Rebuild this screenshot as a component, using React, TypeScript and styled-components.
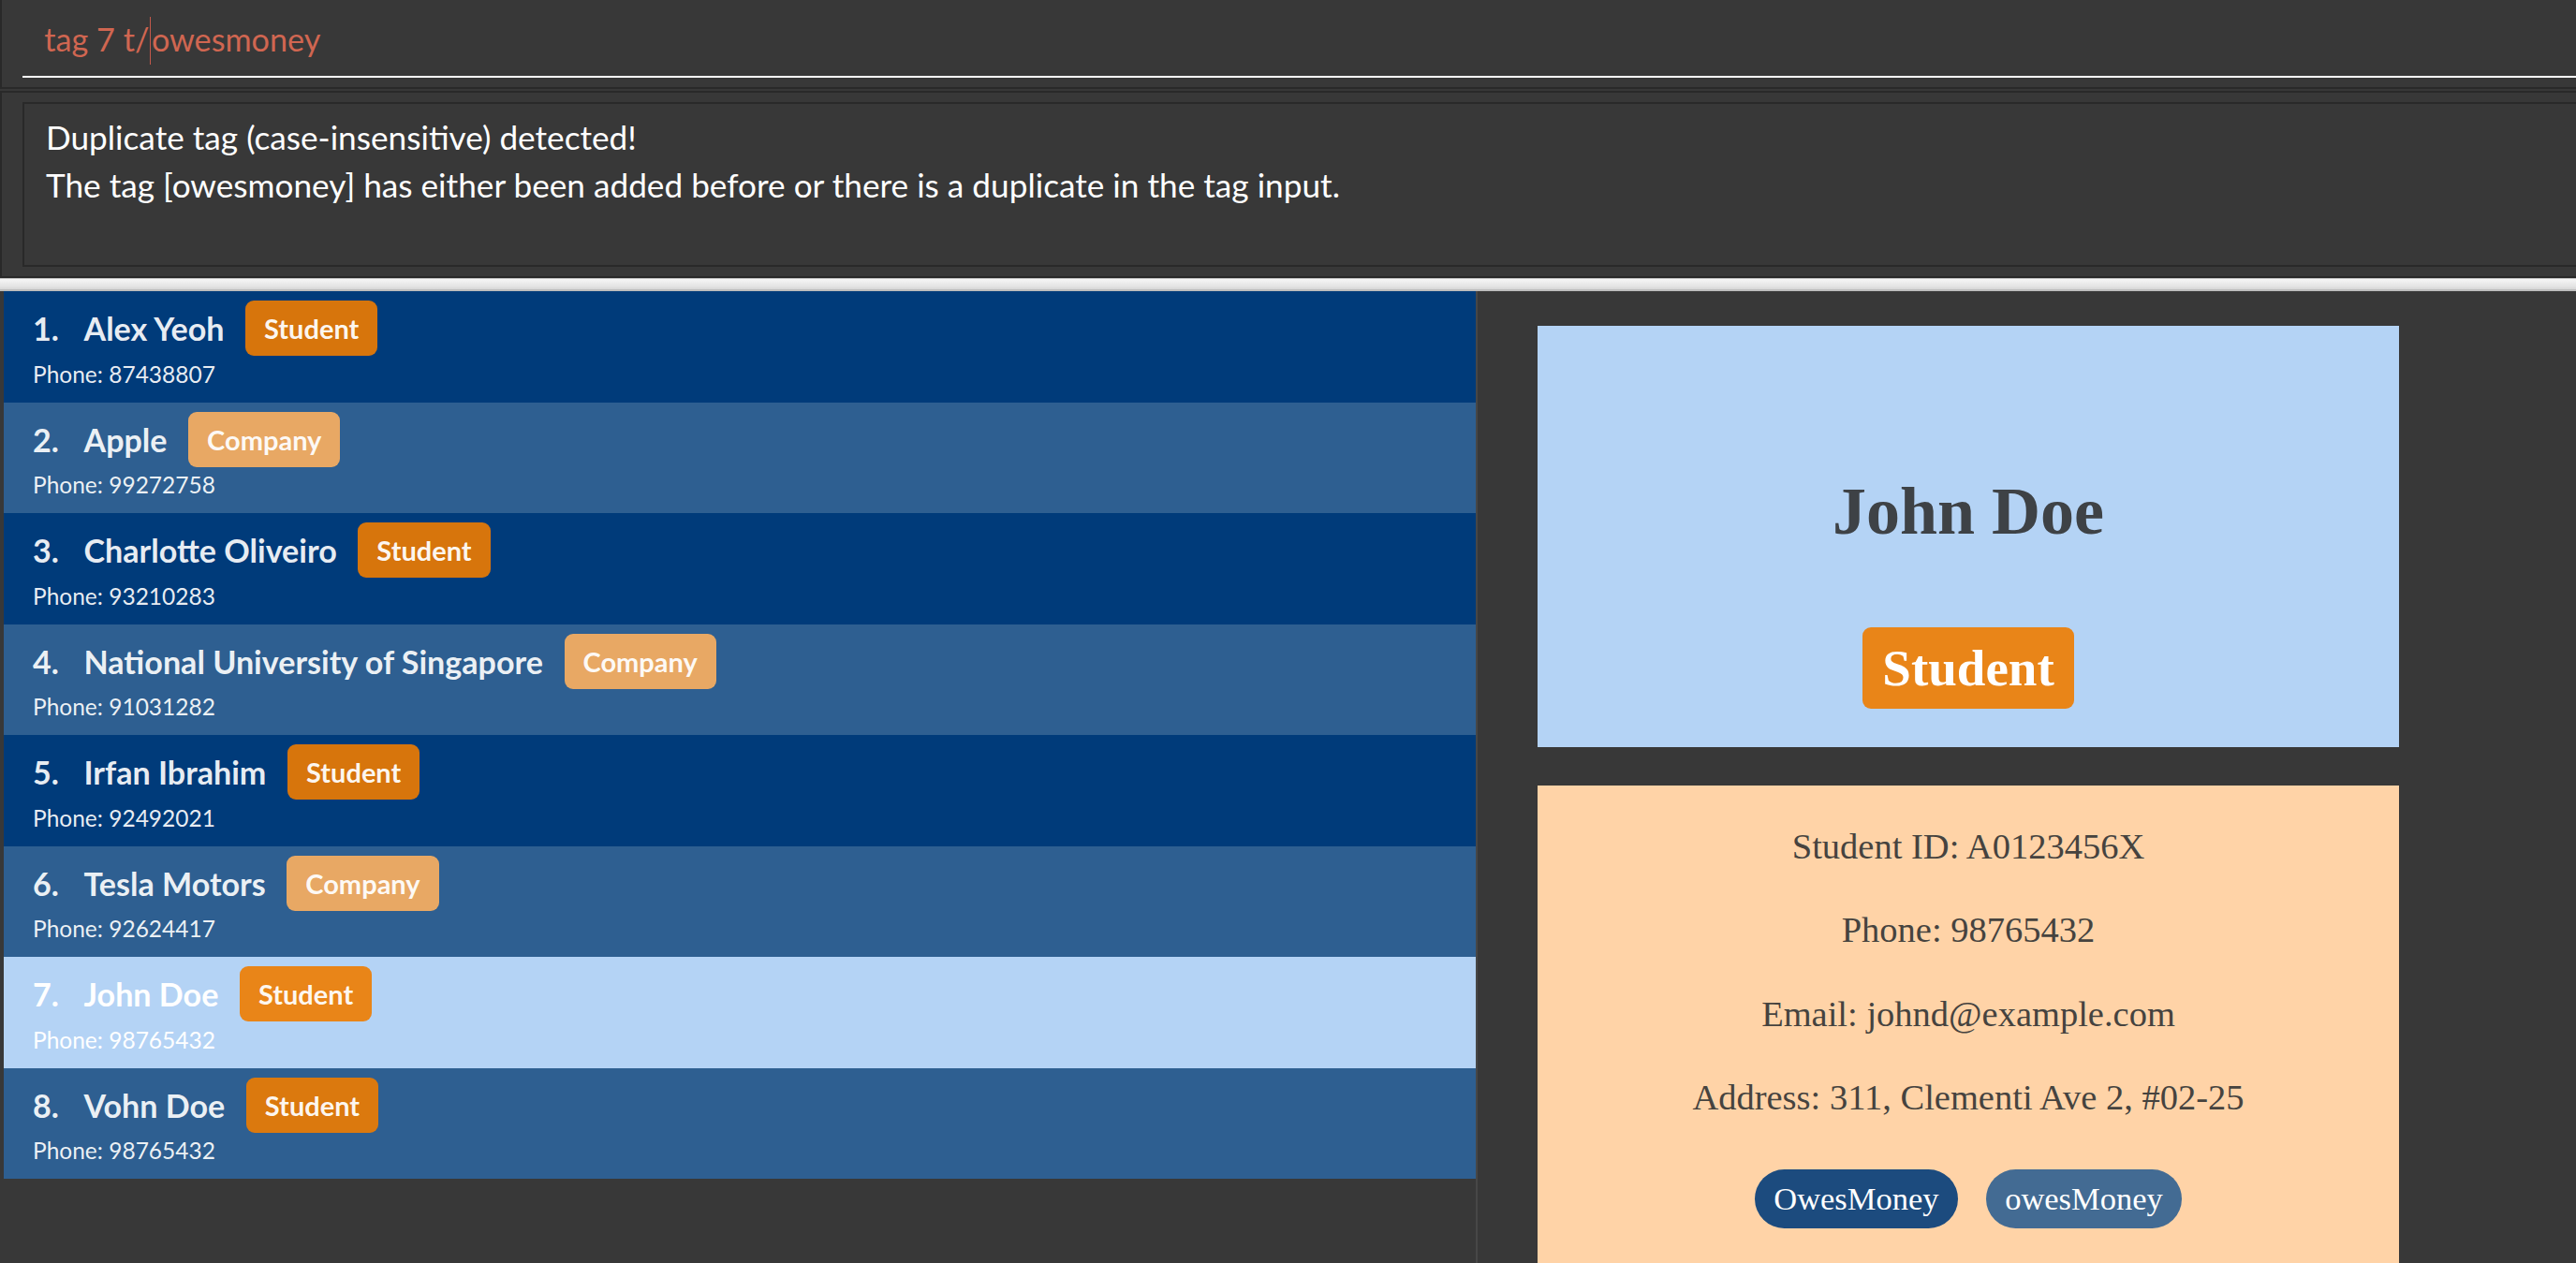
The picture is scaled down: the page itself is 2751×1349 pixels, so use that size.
import React from "react";
import styled, { createGlobalStyle } from "styled-components";

const GlobalStyle = createGlobalStyle`
  html, body {
    margin: 0;
    padding: 0;
    background: #383838;
    overflow: hidden;
  }
  * { box-sizing: border-box; }
`;

const SANS = `"Lato", "Open Sans", "Noto Sans", sans-serif`;
const SERIF = `"Liberation Serif", "DejaVu Serif", serif`;
const BORDER = "#292929";

const Root = styled.div`
  width: 100vw;
  height: 100vh;
  overflow: hidden;
  display: flex;
  flex-direction: column;
  background: #383838;
`;

const CommandBox = styled.div`
  height: 95px;
  flex: none;
  border-left: 2px solid ${BORDER};
  border-bottom: 2px solid ${BORDER};
  padding-left: 22px;
  margin-right: -20px;
`;

const CommandField = styled.div`
  height: 83px;
  border-bottom: 2px solid #ffffff;
  padding: 15.7px 0 0 23.3px;
  font-family: ${SANS};
  font-weight: 400;
  font-size: 34.2px;
  line-height: 51px;
  color: #d06651;
  white-space: pre;
`;

const Caret = styled.span`
  display: inline-block;
  width: 1.5px;
  height: 51px;
  background: #c4584a;
  vertical-align: -14px;
  margin: 0 0.5px;
`;

const ResultOuter = styled.div`
  flex: none;
  margin-top: 2px;
  margin-right: -20px;
  border-top: 2px solid ${BORDER};
  border-bottom: 2px solid ${BORDER};
  border-left: 2px solid ${BORDER};
  padding: 10px 0 10px 22px;
`;

const ResultInner = styled.div`
  height: 176px;
  border: 2px solid ${BORDER};
  padding: 9.6px 0 0 23px;
  font-family: ${SANS};
  font-weight: 400;
  font-size: 35.2px;
  line-height: 51px;
  color: #ffffff;
`;

const Splitter = styled.div`
  flex: none;
  height: 14px;
  border-top: 1px solid #c4c4c4;
  border-bottom: 2px solid #bdbdbd;
  background: linear-gradient(#f6f6f6, #e4e4e4 70%, #d6d6d6);
`;

const Main = styled.div`
  flex: 1;
  display: flex;
  min-height: 0;
`;

const ListColumn = styled.div`
  width: 1574px;
  margin-left: 4px;
  border-right: 2px solid #474747;
  display: flex;
  flex-direction: column;
`;

type RowKind = "dark" | "mid" | "selected";

const rowBg: Record<RowKind, string> = {
  dark: "#003b7a",
  mid: "#2e5f91",
  selected: "#b4d3f5",
};

const Row = styled.div<{ $kind: RowKind }>`
  height: 118.5px;
  flex: none;
  background: ${(p) => rowBg[p.$kind]};
  padding: 10px 0 0 31px;
  display: flex;
  flex-direction: column;
  color: ${(p) => (p.$kind === "selected" ? "#ffffff" : "rgba(255,255,255,0.92)")};
`;

const TopLine = styled.div`
  height: 59px;
  display: flex;
  align-items: center;
  font-family: ${SANS};
  font-weight: 700;
  font-size: 34.1px;
  white-space: nowrap;
`;

const Index = styled.span`
  width: 54.5px;
  flex: none;
`;

const Name = styled.span`
  flex: none;
`;

const Badge = styled.span<{ $type: string }>`
  margin-left: 22.6px;
  height: 59px;
  line-height: 59px;
  padding: 0 20px;
  border-radius: 9px;
  font-family: ${SANS};
  font-weight: 700;
  font-size: 29px;
  color: rgba(255, 255, 255, 0.95);
  background: ${(p) =>
    p.$type === "Company" ? "rgba(253,176,95,0.9)" : "rgba(238,124,0,0.9)"};
`;

const PhoneLine = styled.div`
  margin-top: 4.5px;
  font-family: ${SANS};
  font-weight: 400;
  font-size: 24.5px;
  line-height: 30px;
`;

const DetailPanel = styled.div`
  flex: 1;
  padding: 37px 0 0 64px;
  display: flex;
  flex-direction: column;
`;

const ProfileCard = styled.div`
  width: 920px;
  height: 450px;
  flex: none;
  background: #b4d3f5;
  display: flex;
  flex-direction: column;
  align-items: center;
  padding-top: 155px;
`;

const ProfileName = styled.div`
  font-family: ${SERIF};
  font-weight: 700;
  font-size: 72px;
  line-height: 86px;
  color: #3e4246;
`;

const ProfileBadge = styled.div`
  margin-top: 81px;
  height: 87px;
  line-height: 87px;
  padding: 0 21px;
  border-radius: 9px;
  background: rgba(238, 124, 0, 0.9);
  font-family: ${SERIF};
  font-weight: 700;
  font-size: 55px;
  color: #ffffff;
`;

const InfoCard = styled.div`
  width: 920px;
  height: 520px;
  flex: none;
  margin-top: 40.5px;
  background: #ffd3a7;
  display: flex;
  flex-direction: column;
  align-items: center;
  padding-top: 43.5px;
  gap: 45.2px;
`;

const InfoLine = styled.div`
  font-family: ${SERIF};
  font-size: 38.5px;
  line-height: 44.3px;
  color: #46433f;
  white-space: nowrap;
`;

const TagRow = styled.div`
  margin-top: 8.8px;
  display: flex;
  gap: 30px;
`;

const TagPill = styled.span<{ $dark: boolean }>`
  height: 63.4px;
  line-height: 63.4px;
  padding: 0 20.3px;
  border-radius: 32px;
  background: ${(p) => (p.$dark ? "#1c4b7e" : "#436b93")};
  font-family: ${SERIF};
  font-size: 34.5px;
  color: #ffffff;
`;

const people = [
  { name: "Alex Yeoh", tag: "Student", phone: "87438807" },
  { name: "Apple", tag: "Company", phone: "99272758" },
  { name: "Charlotte Oliveiro", tag: "Student", phone: "93210283" },
  { name: "National University of Singapore", tag: "Company", phone: "91031282" },
  { name: "Irfan Ibrahim", tag: "Student", phone: "92492021" },
  { name: "Tesla Motors", tag: "Company", phone: "92624417" },
  { name: "John Doe", tag: "Student", phone: "98765432" },
  { name: "Vohn Doe", tag: "Student", phone: "98765432" },
];

const SELECTED = 6;

export default function App() {
  return (
    <>
      <GlobalStyle />
      <Root>
        <CommandBox>
          <CommandField>
            tag 7 t/<Caret />owesmoney
          </CommandField>
        </CommandBox>
        <ResultOuter>
          <ResultInner>
            <div>Duplicate tag (case-insensitive) detected!</div>
            <div>
              The tag [owesmoney] has either been added before or there is a duplicate in the tag input.
            </div>
          </ResultInner>
        </ResultOuter>
        <Splitter />
        <Main>
          <ListColumn>
            {people.map((p, i) => {
              const kind: RowKind =
                i === SELECTED ? "selected" : i % 2 === 0 ? "dark" : "mid";
              return (
                <Row key={i} $kind={kind}>
                  <TopLine>
                    <Index>{i + 1}.</Index>
                    <Name>{p.name}</Name>
                    <Badge $type={p.tag}>{p.tag}</Badge>
                  </TopLine>
                  <PhoneLine>Phone: {p.phone}</PhoneLine>
                </Row>
              );
            })}
          </ListColumn>
          <DetailPanel>
            <ProfileCard>
              <ProfileName>John Doe</ProfileName>
              <ProfileBadge>Student</ProfileBadge>
            </ProfileCard>
            <InfoCard>
              <InfoLine>Student ID: A0123456X</InfoLine>
              <InfoLine>Phone: 98765432</InfoLine>
              <InfoLine>Email: johnd@example.com</InfoLine>
              <InfoLine>Address: 311, Clementi Ave 2, #02-25</InfoLine>
              <TagRow>
                <TagPill $dark>OwesMoney</TagPill>
                <TagPill $dark={false}>owesMoney</TagPill>
              </TagRow>
            </InfoCard>
          </DetailPanel>
        </Main>
      </Root>
    </>
  );
}
